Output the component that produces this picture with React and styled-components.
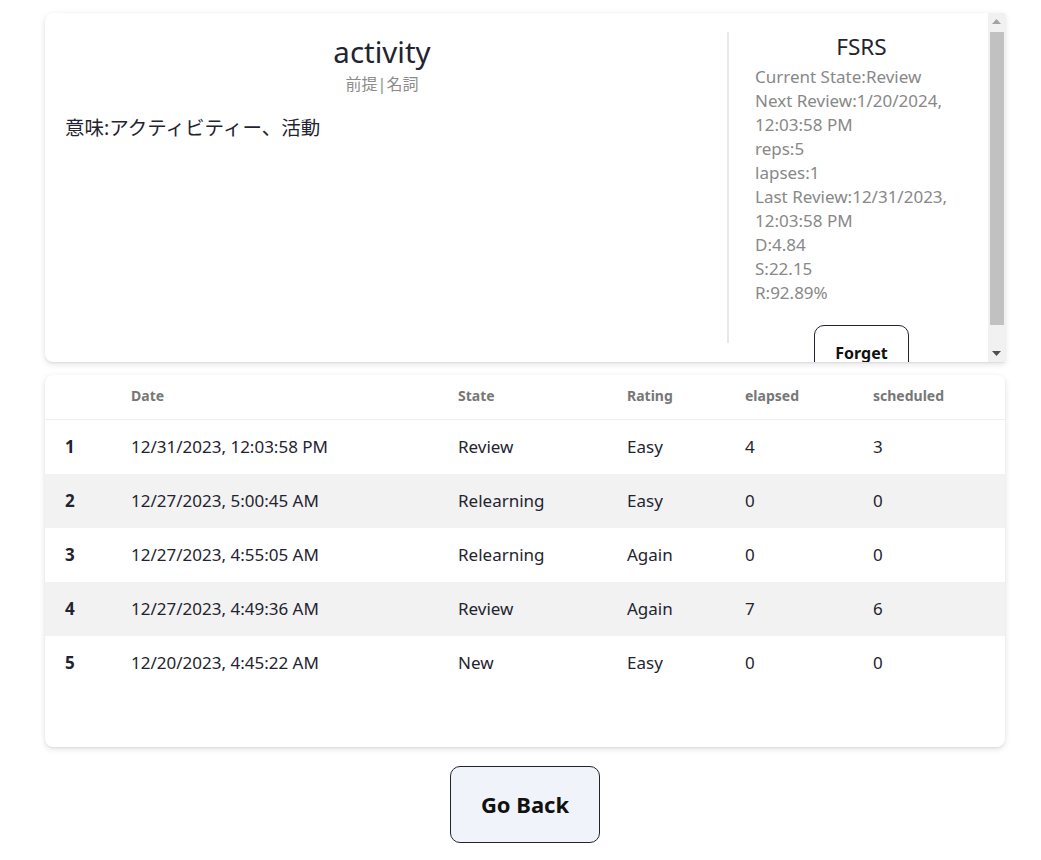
import React from "react";
import styled, { createGlobalStyle } from "styled-components";

const GlobalStyle = createGlobalStyle`
  body {
    margin: 0;
    background: #ffffff;
    font-family: "Noto Sans", "Noto Sans CJK JP", sans-serif;
    color: #1f2430;
  }
`;

const Page = styled.div`
  width: 960px;
  padding: 13px 0 18px 45px;
  display: flex;
  flex-direction: column;
  align-items: center;
`;

const Card = styled.div`
  width: 100%;
  box-sizing: border-box;
  background: #fff;
  border-radius: 8px;
  box-shadow: 0 2px 6px rgba(0, 0, 0, 0.12), 0 1px 2px rgba(0, 0, 0, 0.06);
`;

const WordCard = styled(Card)`
  height: 349px;
  display: flex;
  overflow: hidden;
  border-top-right-radius: 0;
  border-bottom-right-radius: 0;
`;

const WordScroll = styled.div`
  flex: 1;
  overflow-y: auto;
  padding: 19px 0 19px 20px;
  scrollbar-width: none;
`;

/* drawn scrollbar, the page shows a classic one here */
const ScrollBar = styled.div`
  flex: 0 0 17px;
  display: flex;
  flex-direction: column;
  background: #f1f1f1;
`;

const ScrollArrow = styled.div`
  height: 17px;
  display: flex;
  align-items: center;
  justify-content: center;
`;

const ScrollTrack = styled.div`
  flex: 1;
  padding: 2px 1px 0 2px;
`;

const ScrollThumb = styled.div`
  height: 293px;
  background: #c1c1c1;
`;

const WordRow = styled.div`
  display: flex;
  height: 100%;
`;

const WordSide = styled.div`
  flex: 1;
  padding-right: 28px;
`;

const Title = styled.div`
  text-align: center;
  font-size: 29.5px;
  line-height: 40px;
  color: #1f2430;
`;

const SubTitle = styled.div`
  text-align: center;
  font-size: 16px;
  line-height: 24px;
  color: #8c8c8c;
`;

const Meaning = styled.div`
  margin-top: 18px;
  font-size: 19.5px;
  line-height: 28px;
`;

const FsrsSide = styled.div`
  flex: 0 0 261px;
  box-sizing: border-box;
  border-left: 2px solid #e8e8e8;
  padding: 0 20px 0 26px;
`;

const FsrsTitle = styled.div`
  text-align: center;
  font-size: 22.5px;
  line-height: 30px;
  margin-bottom: 3px;
  color: #1f2430;
`;

const InfoLine = styled.div`
  font-size: 17px;
  line-height: 24px;
  color: #888888;
`;

const ButtonWrap = styled.div`
  display: flex;
  justify-content: center;
  margin-top: 20px;
`;

const OutlineButton = styled.button`
  font-family: "Noto Sans", sans-serif;
  font-weight: 700;
  color: #111;
  background: ${(p) => p.$bg || "#fff"};
  border: 1px solid #1f2430;
  border-radius: ${(p) => p.$radius || "10px"};
  font-size: ${(p) => p.$size || "16px"};
  padding: ${(p) => p.$pad || "16px 20px"};
  line-height: 1.4;
  cursor: pointer;
`;

const TableCard = styled(Card)`
  margin-top: 13px;
  padding-bottom: 57px;
  overflow: hidden;
`;

const Table = styled.table`
  width: 100%;
  border-collapse: collapse;
  table-layout: fixed;
`;

const Th = styled.th`
  text-align: left;
  font-size: 14px;
  font-weight: 700;
  color: #777;
  padding: 11px 20px 13px;
  line-height: 20px;
  border-bottom: 1px solid #f0f0f0;
`;

const Tr = styled.tr`
  background: ${(p) => (p.$alt ? "#f2f2f2" : "#fff")};
`;

const Td = styled.td`
  font-size: 17px;
  line-height: 24px;
  padding: 15px 20px;
  font-weight: ${(p) => (p.$bold ? 700 : 400)};
  color: #1f2430;
  white-space: nowrap;
`;

const Footer = styled.div`
  margin-top: 19px;
`;

const cols = [66, 327, 169, 118, 128, 152];

const logs = [
  ["12/31/2023, 12:03:58 PM", "Review", "Easy", 4, 3],
  ["12/27/2023, 5:00:45 AM", "Relearning", "Easy", 0, 0],
  ["12/27/2023, 4:55:05 AM", "Relearning", "Again", 0, 0],
  ["12/27/2023, 4:49:36 AM", "Review", "Again", 7, 6],
  ["12/20/2023, 4:45:22 AM", "New", "Easy", 0, 0],
];

const info = [
  "Current State:Review",
  "Next Review:1/20/2024, 12:03:58 PM",
  "reps:5",
  "lapses:1",
  "Last Review:12/31/2023, 12:03:58 PM",
  "D:4.84",
  "S:22.15",
  "R:92.89%",
];

function Arrow({ up }) {
  return (
    <svg width="9" height="5" viewBox="0 0 9 5">
      <polygon
        points={up ? "0,5 9,5 4.5,0" : "0,0 9,0 4.5,5"}
        fill={up ? "#a3a3a3" : "#505050"}
      />
    </svg>
  );
}

export default function App() {
  return (
    <>
      <GlobalStyle />
      <Page>
        <WordCard>
          <WordScroll>
            <WordRow>
              <WordSide>
                <Title>activity</Title>
                <SubTitle>前提|名詞</SubTitle>
                <Meaning>意味:アクティビティー、活動</Meaning>
              </WordSide>
              <FsrsSide>
                <FsrsTitle>FSRS</FsrsTitle>
                {info.map((line) => (
                  <InfoLine key={line}>{line}</InfoLine>
                ))}
                <ButtonWrap>
                  <OutlineButton>Forget</OutlineButton>
                </ButtonWrap>
              </FsrsSide>
            </WordRow>
          </WordScroll>
          <ScrollBar>
            <ScrollArrow>
              <Arrow up />
            </ScrollArrow>
            <ScrollTrack>
              <ScrollThumb />
            </ScrollTrack>
            <ScrollArrow>
              <Arrow />
            </ScrollArrow>
          </ScrollBar>
        </WordCard>

        <TableCard>
          <Table>
            <colgroup>
              {cols.map((w, i) => (
                <col key={i} style={{ width: w }} />
              ))}
            </colgroup>
            <thead>
              <tr>
                <Th></Th>
                <Th>Date</Th>
                <Th>State</Th>
                <Th>Rating</Th>
                <Th>elapsed</Th>
                <Th>scheduled</Th>
              </tr>
            </thead>
            <tbody>
              {logs.map((row, i) => (
                <Tr key={i} $alt={i % 2 === 1}>
                  <Td $bold>{i + 1}</Td>
                  {row.map((cell, j) => (
                    <Td key={j}>{cell}</Td>
                  ))}
                </Tr>
              ))}
            </tbody>
          </Table>
        </TableCard>

        <Footer>
          <OutlineButton $bg="#f0f4fa" $size="22px" $pad="22px 30px" $radius="10px">
            Go Back
          </OutlineButton>
        </Footer>
      </Page>
    </>
  );
}
